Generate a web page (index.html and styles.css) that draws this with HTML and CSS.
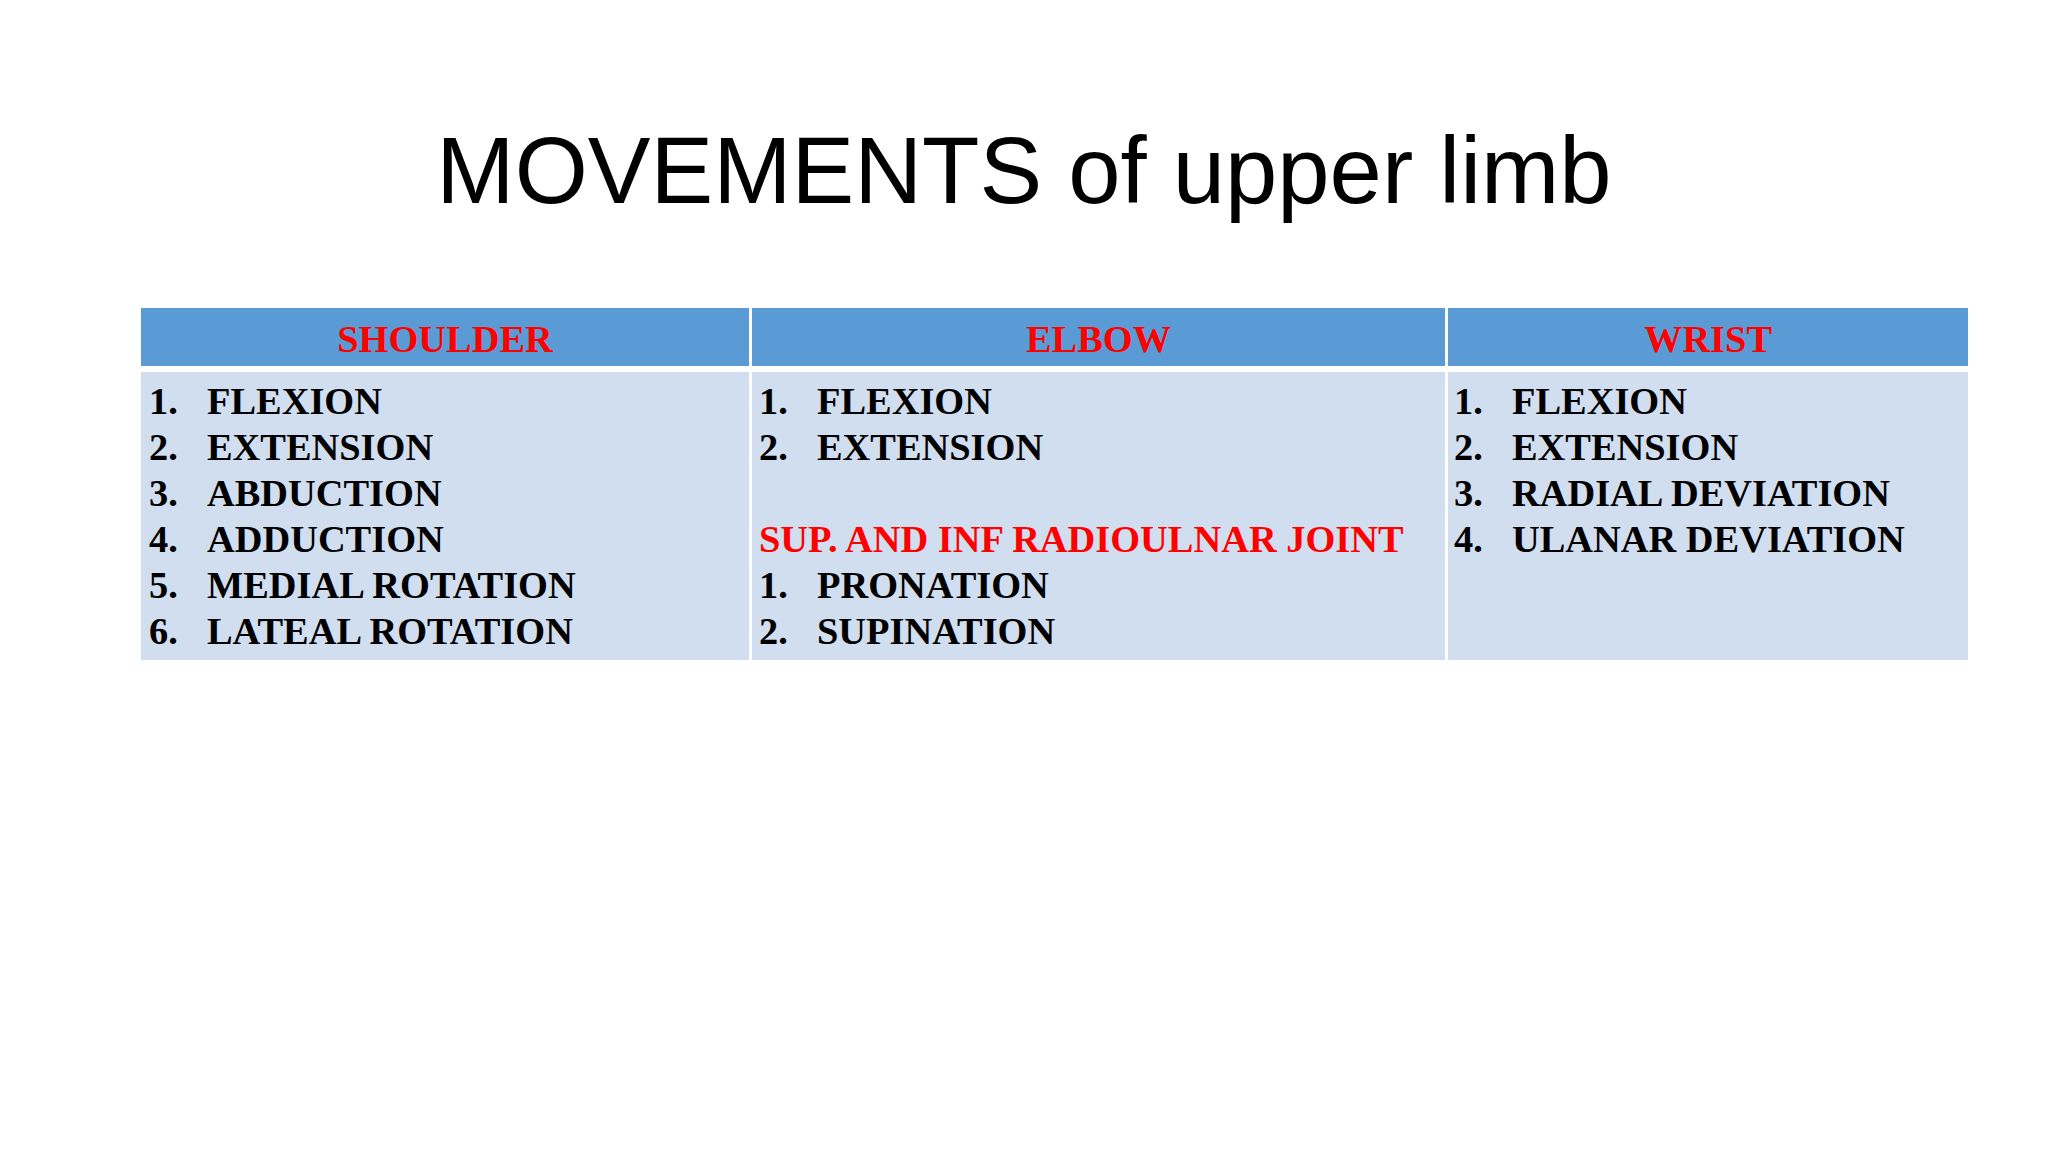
FILE: index.html
```html
<!DOCTYPE html>
<html>
<head>
<meta charset="utf-8">
<link rel="stylesheet" href="styles.css">
</head>
<body>
<div class="slide">
  <h1 class="title">MOVEMENTS of upper limb</h1>
  <div class="table">
    <div class="head">SHOULDER</div>
    <div class="head">ELBOW</div>
    <div class="head">WRIST</div>
    <div class="cell c1">
      <div class="item"><span class="num">1.</span>FLEXION</div>
      <div class="item"><span class="num">2.</span>EXTENSION</div>
      <div class="item"><span class="num">3.</span>ABDUCTION</div>
      <div class="item"><span class="num">4.</span>ADDUCTION</div>
      <div class="item"><span class="num">5.</span>MEDIAL ROTATION</div>
      <div class="item"><span class="num">6.</span>LATEAL ROTATION</div>
    </div>
    <div class="cell c2">
      <div class="item"><span class="num">1.</span>FLEXION</div>
      <div class="item"><span class="num">2.</span>EXTENSION</div>
      <div class="item blank">&nbsp;</div>
      <div class="item red">SUP. AND INF RADIOULNAR JOINT</div>
      <div class="item"><span class="num">1.</span>PRONATION</div>
      <div class="item"><span class="num">2.</span>SUPINATION</div>
    </div>
    <div class="cell c3">
      <div class="item"><span class="num">1.</span>FLEXION</div>
      <div class="item"><span class="num">2.</span>EXTENSION</div>
      <div class="item"><span class="num">3.</span>RADIAL DEVIATION</div>
      <div class="item"><span class="num">4.</span>ULANAR DEVIATION</div>
    </div>
  </div>
</div>
</body>
</html>
```
FILE: styles.css
```css
html, body {
  margin: 0;
  padding: 0;
  background: #ffffff;
}
.slide {
  width: 2048px;
  height: 1152px;
  overflow: hidden;
  display: flex;
  flex-direction: column;
  align-items: stretch;
}
.title {
  margin: 117px 0 0 0;
  font-family: "Liberation Sans", Arial, sans-serif;
  font-weight: normal;
  font-size: 94px;
  line-height: 108px;
  text-align: center;
  color: #000000;
}
.table {
  margin: 83px 0 0 141px;
  width: 1827px;
  display: grid;
  grid-template-columns: 608px 693px 520px;
  grid-template-rows: 58px 288px;
  column-gap: 3px;
  row-gap: 6px;
  font-family: "Liberation Serif", "Times New Roman", serif;
  font-weight: bold;
  font-size: 38.4px;
  line-height: 46px;
}
.head {
  background: #5b9bd5;
  color: #ff0000;
  text-align: center;
  padding-top: 8px;
  box-sizing: border-box;
}
.cell {
  background: #d0deef;
  color: #000000;
  padding: 6px 8px;
  box-sizing: border-box;
}
.c2 {
  padding-left: 7px;
}
.c3 {
  padding-left: 6px;
}
.item {
  display: flex;
  white-space: nowrap;
}
.num {
  display: inline-block;
  width: 58px;
  flex: none;
}
.red {
  color: #ff0000;
}
```
